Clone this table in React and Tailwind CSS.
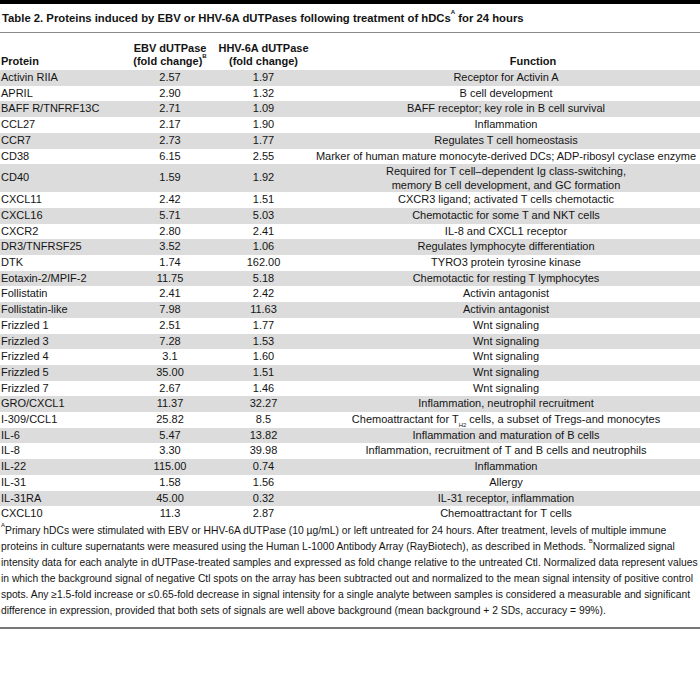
import React from 'react';

const ROWS = [
  ['Activin RIIA', '2.57', '1.97', 'Receptor for Activin A'],
  ['APRIL', '2.90', '1.32', 'B cell development'],
  ['BAFF R/TNFRF13C', '2.71', '1.09', 'BAFF receptor; key role in B cell survival'],
  ['CCL27', '2.17', '1.90', 'Inflammation'],
  ['CCR7', '2.73', '1.77', 'Regulates T cell homeostasis'],
  ['CD38', '6.15', '2.55', 'Marker of human mature monocyte-derived DCs; ADP-ribosyl cyclase enzyme'],
  ['CD40', '1.59', '1.92', 'cd40'],
  ['CXCL11', '2.42', '1.51', 'CXCR3 ligand; activated T cells chemotactic'],
  ['CXCL16', '5.71', '5.03', 'Chemotactic for some T and NKT cells'],
  ['CXCR2', '2.80', '2.41', 'IL-8 and CXCL1 receptor'],
  ['DR3/TNFRSF25', '3.52', '1.06', 'Regulates lymphocyte differentiation'],
  ['DTK', '1.74', '162.00', 'TYRO3 protein tyrosine kinase'],
  ['Eotaxin-2/MPIF-2', '11.75', '5.18', 'Chemotactic for resting T lymphocytes'],
  ['Follistatin', '2.41', '2.42', 'Activin antagonist'],
  ['Follistatin-like', '7.98', '11.63', 'Activin antagonist'],
  ['Frizzled 1', '2.51', '1.77', 'Wnt signaling'],
  ['Frizzled 3', '7.28', '1.53', 'Wnt signaling'],
  ['Frizzled 4', '3.1', '1.60', 'Wnt signaling'],
  ['Frizzled 5', '35.00', '1.51', 'Wnt signaling'],
  ['Frizzled 7', '2.67', '1.46', 'Wnt signaling'],
  ['GRO/CXCL1', '11.37', '32.27', 'Inflammation, neutrophil recruitment'],
  ['I-309/CCL1', '25.82', '8.5', 'th2'],
  ['IL-6', '5.47', '13.82', 'Inflammation and maturation of B cells'],
  ['IL-8', '3.30', '39.98', 'Inflammation, recruitment of T and B cells and neutrophils'],
  ['IL-22', '115.00', '0.74', 'Inflammation'],
  ['IL-31', '1.58', '1.56', 'Allergy'],
  ['IL-31RA', '45.00', '0.32', 'IL-31 receptor, inflammation'],
  ['CXCL10', '11.3', '2.87', 'Chemoattractant for T cells'],
];

function FunctionCell({ text }) {
  if (text === 'cd40') {
    return (
      <>
        Required for T cell–dependent Ig class-switching,
        <br />
        memory B cell development, and GC formation
      </>
    );
  }
  if (text === 'th2') {
    return (
      <>
        Chemoattractant for T<sub className="text-[6px] align-[-2px]">H2</sub> cells, a subset of Tregs-and monocytes
      </>
    );
  }
  return text;
}

export default function App() {
  return (
    <div className="w-[700px] bg-white text-[#141414] font-['Liberation_Sans',sans-serif] text-[11px]">
      <div className="h-[4px] bg-black" />
      <div className="h-[29px] flex items-center pl-[2px] border-b border-[#8a8a8a] text-[11.3px] font-bold">
        <span>
          Table 2. Proteins induced by EBV or HHV-6A dUTPases following treatment of hDCs
          <sup className="text-[6px] font-bold align-[5px]">A</sup> for 24 hours
        </span>
      </div>

      <table className="w-full border-collapse table-fixed">
        <colgroup>
          <col className="w-[125px]" />
          <col className="w-[90px]" />
          <col className="w-[97px]" />
          <col />
        </colgroup>
        <thead>
          <tr className="h-[37px] font-bold">
            <th className="text-left align-bottom pl-[1px] pb-[2px] leading-[13px] font-bold">Protein</th>
            <th className="text-center align-bottom pb-[2px] leading-[13px] font-bold">
              EBV dUTPase
              <br />
              (fold change)<sup className="text-[6px] align-[4px]">B</sup>
            </th>
            <th className="text-center align-bottom pb-[2px] leading-[13px] font-bold">
              HHV-6A dUTPase
              <br />
              (fold change)
            </th>
            <th className="text-center align-bottom pb-[2px] pl-[54px] leading-[13px] font-bold">Function</th>
          </tr>
        </thead>
        <tbody>
          {ROWS.map((r, i) => (
            <tr key={r[0]} className={i % 2 === 0 ? 'bg-[#dcdcdc]' : 'bg-white'}>
              <td className={`pl-[1px] leading-[15.7px] ${r[3] === 'cd40' ? 'py-[6px]' : ''}`}>{r[0]}</td>
              <td className="text-center leading-[15.7px]">{r[1]}</td>
              <td className="text-center leading-[15.7px]">{r[2]}</td>
              <td className={`text-center whitespace-nowrap ${r[3] === 'cd40' ? 'leading-[14px]' : 'leading-[15.7px]'}`}>
                <FunctionCell text={r[3]} />
              </td>
            </tr>
          ))}
        </tbody>
      </table>

      <div className="pt-[1px] pb-[8px] pl-[1px] leading-[16px] text-[10.3px] whitespace-nowrap border-b-2 border-[#777]">
        <div>
          <sup className="text-[6px] align-[4px]">A</sup>Primary hDCs were stimulated with EBV or HHV-6A dUTPase (10 µg/mL) or left untreated for 24 hours. After treatment, levels of multiple immune
        </div>
        <div>
          proteins in culture supernatants were measured using the Human L-1000 Antibody Array (RayBiotech), as described in Methods.{' '}
          <sup className="text-[6px] align-[4px]">B</sup>Normalized signal
        </div>
        <div>
          intensity data for each analyte in dUTPase-treated samples and expressed as fold change relative to the untreated Ctl. Normalized data represent values
        </div>
        <div>
          in which the background signal of negative Ctl spots on the array has been subtracted out and normalized to the mean signal intensity of positive control
        </div>
        <div>
          spots. Any ≥1.5-fold increase or ≤0.65-fold decrease in signal intensity for a single analyte between samples is considered a measurable and significant
        </div>
        <div>
          difference in expression, provided that both sets of signals are well above background (mean background + 2 SDs, accuracy = 99%).
        </div>
      </div>
    </div>
  );
}
